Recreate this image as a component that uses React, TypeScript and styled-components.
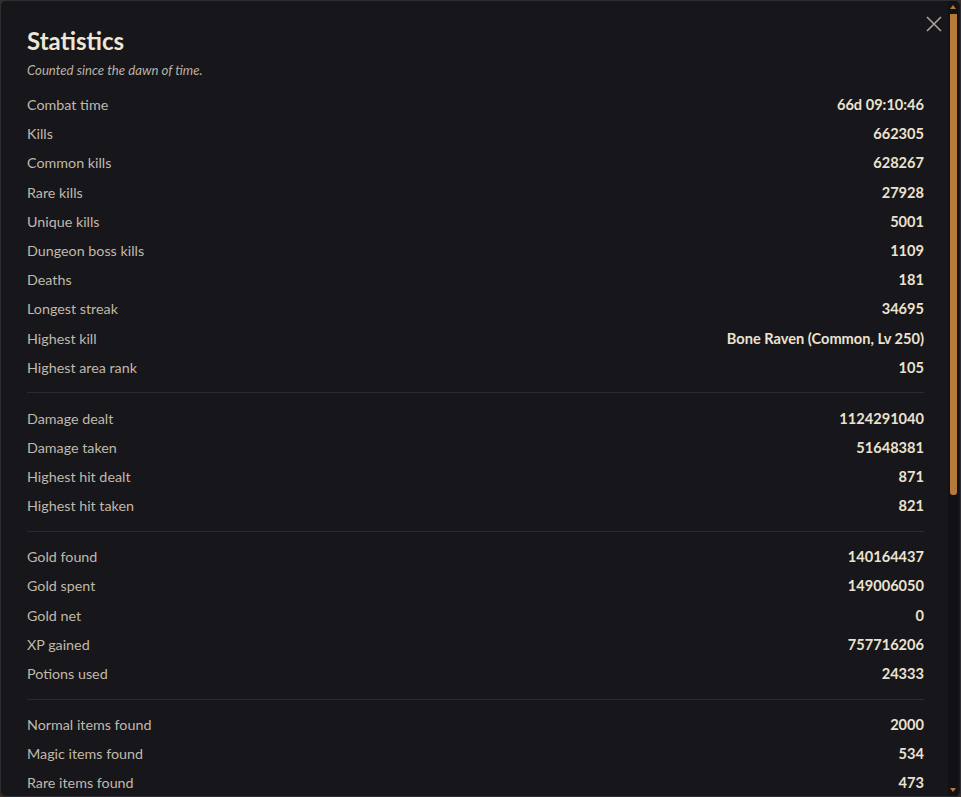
import styled, { createGlobalStyle } from 'styled-components';

type Stat = {
  label: string;
  value: string;
};

const GlobalStyle = createGlobalStyle`
  html, body {
    margin: 0;
    padding: 0;
    background: #3a3029;
    height: 100%;
  }
  #root {
    height: 100%;
  }
`;

const sections: Stat[][] = [
  [
    { label: 'Combat time', value: '66d 09:10:46' },
    { label: 'Kills', value: '662305' },
    { label: 'Common kills', value: '628267' },
    { label: 'Rare kills', value: '27928' },
    { label: 'Unique kills', value: '5001' },
    { label: 'Dungeon boss kills', value: '1109' },
    { label: 'Deaths', value: '181' },
    { label: 'Longest streak', value: '34695' },
    { label: 'Highest kill', value: 'Bone Raven (Common, Lv 250)' },
    { label: 'Highest area rank', value: '105' },
  ],
  [
    { label: 'Damage dealt', value: '1124291040' },
    { label: 'Damage taken', value: '51648381' },
    { label: 'Highest hit dealt', value: '871' },
    { label: 'Highest hit taken', value: '821' },
  ],
  [
    { label: 'Gold found', value: '140164437' },
    { label: 'Gold spent', value: '149006050' },
    { label: 'Gold net', value: '0' },
    { label: 'XP gained', value: '757716206' },
    { label: 'Potions used', value: '24333' },
  ],
  [
    { label: 'Normal items found', value: '2000' },
    { label: 'Magic items found', value: '534' },
    { label: 'Rare items found', value: '473' },
    { label: 'Unique items found', value: '96' },
    { label: 'Set items found', value: '41' },
    { label: 'Items sold', value: '2712' },
    { label: 'Items salvaged', value: '318' },
  ],
  [
    { label: 'Dungeons entered', value: '1187' },
    { label: 'Dungeons cleared', value: '1109' },
    { label: 'Areas unlocked', value: '105' },
    { label: 'Quests completed', value: '412' },
    { label: 'Skills learned', value: '38' },
  ],
];

const Modal = styled.div`
  position: relative;
  box-sizing: border-box;
  height: 100%;
  background: #16161b;
  border: 1px solid #2e2d33;
  border-radius: 6px;
  overflow: hidden;
  font-family: 'Source Sans Pro', Lato, 'Noto Sans', sans-serif;
`;

const Scroller = styled.div`
  box-sizing: border-box;
  height: 100%;
  overflow-y: auto;
  padding: 21px 36px 30px 26px;
  scrollbar-width: none;

  &::-webkit-scrollbar {
    display: none;
  }
`;

/* themed scrollbar drawn over the right edge of the panel */
const ScrollTrack = styled.div`
  position: absolute;
  top: 0;
  bottom: 0;
  right: 2px;
  width: 10px;
  box-sizing: border-box;
  padding: 4px 0;
  display: flex;
  flex-direction: column;
  align-items: center;
  background: #121216;
  pointer-events: none;
`;

const ScrollArrow = styled.div<{ $down?: boolean }>`
  width: 0;
  height: 0;
  border-left: 3px solid transparent;
  border-right: 3px solid transparent;
  ${({ $down }) => ($down ? 'border-top: 4px solid #b47a3a;' : 'border-bottom: 4px solid #b47a3a;')}
`;

const ScrollThumb = styled.div`
  margin-top: 5px;
  width: 7px;
  flex-shrink: 0;
  background: #b47a3a;
  border-radius: 0 0 3px 3px;
`;

const ScrollSpacer = styled.div`
  flex: 1;
`;

const CloseButton = styled.button`
  position: absolute;
  top: 13px;
  right: 16px;
  width: 20px;
  height: 20px;
  padding: 0;
  border: none;
  background: none;
  color: #a9a49b;
  cursor: pointer;
  display: flex;
  align-items: center;
  justify-content: center;
`;

const Title = styled.h2`
  margin: 0;
  font-size: 24px;
  line-height: 38px;
  font-weight: 700;
  color: #efe6d3;
`;

const Subtitle = styled.p`
  margin: 0 0 10px;
  font-size: 13.2px;
  line-height: 20px;
  font-style: italic;
  color: #b9b2a4;
`;

const Section = styled.div`
  display: flex;
  flex-direction: column;
`;

const Divider = styled.hr`
  margin: 10.4px 0;
  border: none;
  border-top: 1px solid #2b2a30;
`;

const Row = styled.div`
  display: flex;
  align-items: center;
  justify-content: space-between;
  height: 29.2px;
  font-size: 14.3px;
`;

const Label = styled.span`
  color: #c1b9aa;
`;

const Value = styled.span`
  font-size: 14.6px;
  font-weight: 700;
  color: #ebe2cf;
`;

const App = () => {
  const viewport = 797;
  const content = 1277;
  const trackSpan = viewport - 26;
  const thumbHeight = Math.round((viewport / content) * trackSpan);

  return (
    <>
      <GlobalStyle />
      <Modal>
        <CloseButton aria-label="Close">
          <svg width="16" height="16" viewBox="0 0 16 16" fill="none" stroke="currentColor" strokeWidth="1.6">
            <path d="M1 1L15 15M15 1L1 15" />
          </svg>
        </CloseButton>
        <Scroller>
          <Title>Statistics</Title>
          <Subtitle>Counted since the dawn of time.</Subtitle>
          {sections.map((section, index) => (
            <div key={index}>
              {index > 0 && <Divider />}
              <Section>
                {section.map(({ label, value }) => (
                  <Row key={label}>
                    <Label>{label}</Label>
                    <Value>{value}</Value>
                  </Row>
                ))}
              </Section>
            </div>
          ))}
        </Scroller>
        <ScrollTrack>
          <ScrollArrow />
          <ScrollThumb style={{ height: thumbHeight }} />
          <ScrollSpacer />
          <ScrollArrow $down />
        </ScrollTrack>
      </Modal>
    </>
  );
};

export default App;
